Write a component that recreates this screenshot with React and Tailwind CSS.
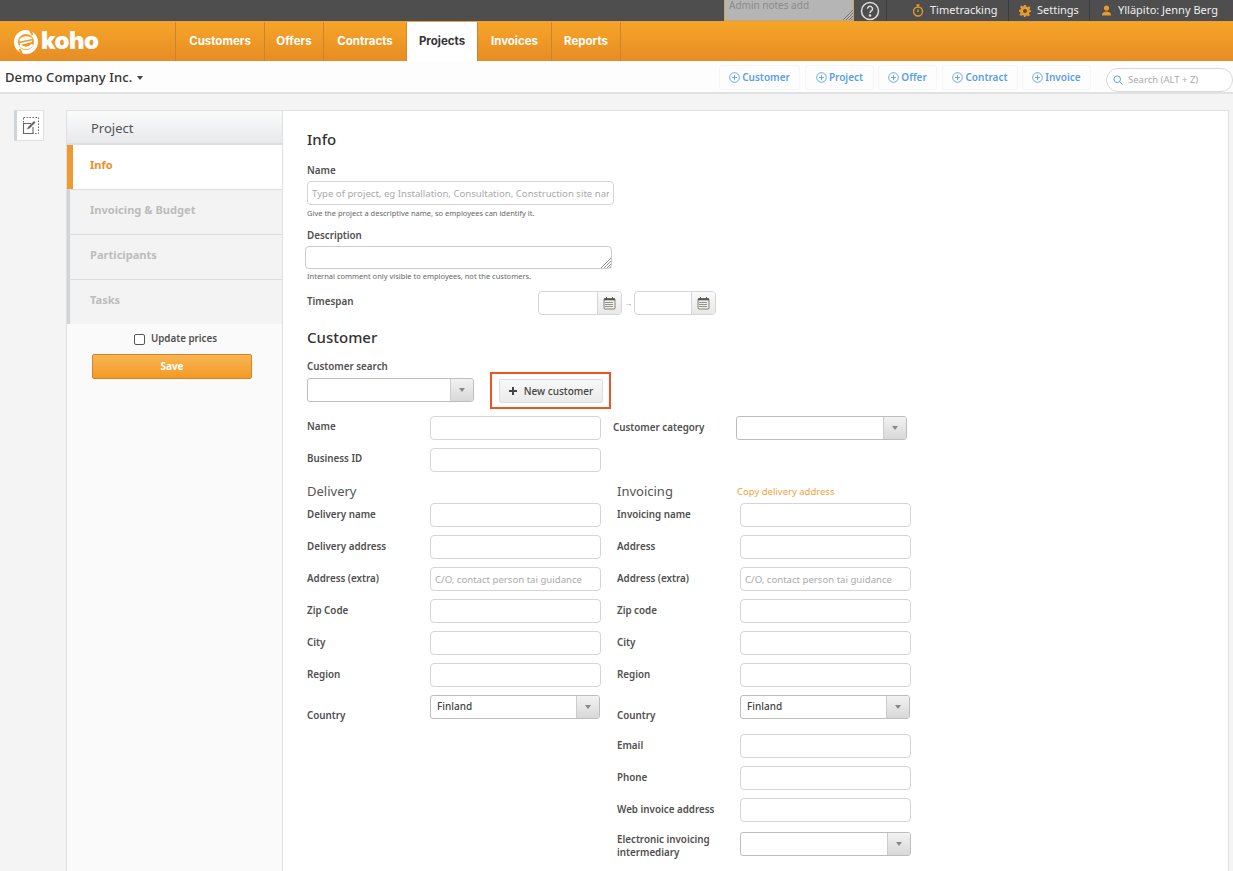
import React from "react";

const Tri = ({ c = "border-t-[#888]" }) => <span className={`inline-block w-0 h-0 border-l-[3px] border-r-[3px] border-t-[4px] border-l-transparent border-r-transparent ${c}`} />;

const Input = ({ w = "w-[171px]", placeholder, className = "" }) => (
  <input readOnly placeholder={placeholder} className={`${w} h-[24px] shrink-0 bg-white border border-[#d5d5d5] rounded-[4px] px-[4px] text-[9.6px] text-[#444] placeholder:text-[#aaa] outline-none ${className}`} />
);

const Select = ({ w = "w-[171px]", value }) => (
  <div className={`${w} h-[24px] shrink-0 bg-white border border-[#bdbdbd] rounded-[3px] flex items-stretch overflow-hidden`}>
    <div className="flex-1 pl-[6px] text-[10px] font-medium text-[#444] leading-[21px]">{value}</div>
    <div className="w-[23px] border-l border-[#ccc] bg-gradient-to-b from-[#f2f2f2] to-[#d8d8d8] flex items-center justify-center"><Tri /></div>
  </div>
);

const Lab = ({ children, className = "" }) => <div className={`text-[9.8px] font-semibold text-[#505050] ${className}`}>{children}</div>;

const Row = ({ label, children, labelW = "w-[123px]", labelClass = "" }) => (
  <div className="flex items-start h-[24px] mb-[8px]">
    <Lab className={`${labelW} shrink-0 leading-[24px] ${labelClass}`}>{label}</Lab>
    {children}
  </div>
);

const Cal = () => (
  <svg width="13" height="14" viewBox="0 0 13 14" fill="none">
    <rect x="1" y="2.5" width="11" height="10.5" rx="1" fill="#f3efe8" stroke="#666" strokeWidth="0.8" />
    <rect x="1" y="2.5" width="11" height="1.8" fill="#555" />
    <path d="M3.5 1v2.5M9.5 1v2.5" stroke="#555" strokeWidth="1" />
    <path d="M2.5 6.5h8M2.5 8.5h8M2.5 10.5h8" stroke="#333" strokeDasharray="1 1" />
  </svg>
);

const DateField = ({ w }) => (
  <div className={`${w} h-[24px] bg-white border border-[#d5d5d5] rounded-[4px] flex justify-end overflow-hidden`}>
    <div className="w-[24px] border-l border-[#d5d5d5] bg-gradient-to-b from-[#fafafa] to-[#e8e8e8] flex items-center justify-center"><Cal /></div>
  </div>
);

const PlusCircle = () => (
  <svg width="11" height="11" viewBox="0 0 11 11" fill="none" stroke="#5b9fe6" strokeWidth="0.9" className="shrink-0">
    <circle cx="5.5" cy="5.5" r="4.8" />
    <path d="M5.5 3v5M3 5.5h5" />
  </svg>
);

const tabs = [
  ["Customers", "w-[89px]"],
  ["Offers", "w-[59px]"],
  ["Contracts", "w-[83px]"],
  ["Projects", "w-[71px]", true],
  ["Invoices", "w-[74px]"],
  ["Reports", "w-[69px]"],
];

const actions = [
  ["Customer", "w-[81px]", "mr-[5px]"],
  ["Project", "w-[69px]", "mr-[4px]"],
  ["Offer", "w-[59px]", "mr-[5px]"],
  ["Contract", "w-[76px]", "mr-[4px]"],
  ["Invoice", "w-[69px]", ""],
];

const delivery = [
  ["Delivery name"], ["Delivery address"], ["Address (extra)", "C/O, contact person tai guidance"], ["Zip Code"], ["City"], ["Region"],
];
const invoicing = [
  ["Invoicing name"], ["Address"], ["Address (extra)", "C/O, contact person tai guidance"], ["Zip code"], ["City"], ["Region"],
];

const side = ["Invoicing & Budget", "Participants", "Tasks"];

export default function App() {
  return (
    <div className="h-[871px] w-[1233px] overflow-hidden bg-[#f4f4f4] text-[#333]" style={{ fontFamily: '"Noto Sans", sans-serif' }}>
      {/* top bar */}
      <div className="h-[21px] bg-[#4e4e4e] flex justify-end items-stretch text-[11px] text-[#eee]">
        <div className="w-[130px] bg-[#b5b5b5] border-x border-b border-[#c9a765] relative text-[10px] text-[#8b8b8b] pl-[4px] leading-[10px]">
          Admin notes add
          <svg width="11" height="11" viewBox="0 0 11 11" className="absolute right-0 bottom-0" stroke="#666" strokeWidth="0.8"><path d="M1 11L11 1M4 11l7-7M7 11l4-4M9.5 11L11 9.5" /></svg>
        </div>
        <div className="w-[33px] flex items-center justify-center border-r border-[#3c3c3c]">
          <svg width="20" height="20" viewBox="0 0 20 20" fill="none" stroke="#ddd" strokeWidth="1.5">
            <circle cx="10" cy="10" r="8.5" />
            <path d="M7.5 7.8a2.5 2.5 0 1 1 3.8 2.1c-.9.6-1.3 1-1.3 2" />
            <circle cx="10" cy="14.5" r=".6" fill="#ddd" />
          </svg>
        </div>
        <div className="w-[122px] flex items-center pl-[25px] gap-[6px] border-r border-[#3c3c3c]">
          <svg width="12" height="13" viewBox="0 0 12 13" fill="none" stroke="#e89b2c" strokeWidth="1.3" className="shrink-0"><circle cx="6" cy="7.5" r="4.5" /><path d="M4.5 1h3M6 1v2M6 5.5v2.5" /></svg>
          Timetracking
        </div>
        <div className="w-[81px] flex items-center pl-[10px] gap-[6px] border-r border-[#3c3c3c]">
          <svg width="12" height="12" viewBox="0 0 24 24" fill="#e89b2c" className="shrink-0"><path fillRule="evenodd" d="M10 0h4l.8 3.6 2.2.9 3.1-2 2.8 2.8-2 3.1.9 2.2L24 11v3l-3.2.8-.9 2.2 2 3.1-2.8 2.8-3.1-2-2.2.9L13 24h-3l-.8-3.200-2.200-.9-3.100 2L1.100 19.100l2-3.100-.9-2.200L0 13v-3l3.200-.8.9-2.200-2-3.100L4.900 1.100l3.100 2 1.200-.5zM12 8a4 4 0 1 0 0 8 4 4 0 0 0 0-8z" /></svg>
          Settings
        </div>
        <div className="w-[143px] flex items-center pl-[11px] gap-[6px]">
          <svg width="11" height="11" viewBox="0 0 11 11" fill="#e89b2c" className="shrink-0"><circle cx="5.5" cy="3" r="2.6" /><path d="M1 10.5c0-3 2-4 4.5-4s4.5 1 4.5 4z" /></svg>
          Ylläpito: Jenny Berg
        </div>
      </div>

      {/* orange nav */}
      <div className="h-[40px] bg-gradient-to-b from-[#f6a429] to-[#e68d24] flex items-stretch border-t border-[#e8a040]">
        <div className="w-[175px] flex items-center pl-[14px] gap-[3px]">
          <svg width="24" height="24" viewBox="0 0 24 24" fill="none" className="shrink-0">
            <circle cx="12" cy="12" r="10" stroke="#fff" strokeWidth="4" />
            <path d="M5.5 9.5C8 6 15 5 18.5 8.5L18 12 6 15z" fill="#fff" />
            <path d="M6 15c3 4 9 4 12.5-.5" stroke="#fff" strokeWidth="2.5" />
            <path d="M5 12.5L19 9.5" stroke="#f09a28" strokeWidth="1.6" />
            <path d="M16 0l2.5 5M5.5 19L8 24" stroke="#f29d2a" strokeWidth="2" />
          </svg>
          <span className="text-[24px] leading-none font-black text-white tracking-[-0.5px] -mt-[2px]" style={{ fontFamily: "Inter, sans-serif" }}>koho</span>
        </div>
        {tabs.map(([t, w, active]) => (
          <div key={t} className={`${w} border-l pt-[1px] ${active ? "bg-white text-[#333] border-[#d9892c]" : "text-white border-[#d0832a]"} flex items-center justify-center text-[11.5px] font-bold`} style={{ fontFamily: "Inter, sans-serif" }}>{t}</div>
        ))}
        <div className="border-l border-[#d0832a]" />
      </div>

      {/* sub bar */}
      <div className="h-[33px] bg-[#fdfdfd] border-b-2 border-[#e2e2e2] flex items-center pr-0">
        <div className="pl-[5px] pt-[3px] text-[13px] font-medium text-[#333] flex items-center gap-[5px] tracking-[0.1px]">Demo Company Inc. <Tri c="border-t-[#444]" /></div>
        <div className="ml-auto mt-[2px] flex items-center">
          {actions.map(([t, w, m]) => (
            <div key={t} className={`${w} ${m} h-[25px] border border-[#f5f6f8] rounded-[3px] flex items-center justify-center gap-[2px] text-[10px] font-semibold text-[#5b9fe6]`}><PlusCircle />{t}</div>
          ))}
          <div className="ml-[15px] w-[127px] h-[24px] mt-[5px] border border-[#d8d8d8] rounded-full bg-white flex items-center pl-[6px] gap-[5px] text-[9.5px] text-[#aaa]">
            <svg width="10" height="10" viewBox="0 0 10 10" fill="none" stroke="#5b9fe6" strokeWidth="1" className="shrink-0"><circle cx="4.2" cy="4.2" r="3.3" /><path d="M6.7 6.7L9.5 9.5" /></svg>
            Search (ALT + Z)
          </div>
        </div>
      </div>

      {/* body */}
      <div className="flex items-start pt-[16px] pl-[14px]">
        <div className="w-[30px] h-[31px] shrink-0 bg-white border border-[#e0e0e0] border-l-[3px] border-l-[#cfd4d9] flex items-center justify-center">
          <svg width="17" height="18" viewBox="0 0 17 18" fill="none" stroke="#666">
            <rect x="1.5" y=".5" width="15" height="16" strokeDasharray="1.5 1.5" strokeWidth="1" />
            <path d="M9 6.5H1.5v10H11V10" fill="#fff" stroke="#666" strokeWidth="1.1" />
            <path d="M5 12.5l1-2.500L12 4l1.500 1.500-6 6z" fill="#666" stroke="none" />
          </svg>
        </div>

        <div className="ml-[22px] w-[1163px] h-[780px] bg-white border border-[#e0e0e0] flex">
          {/* sidebar */}
          <div className="w-[216px] shrink-0 bg-[#fafafa] border-r border-[#e0e0e0]">
            <div className="h-[34px] bg-gradient-to-b from-[#fbfbfb] to-[#e7e9eb] border-b-2 border-[#dcdfe2] pl-[24px] text-[13px] text-[#555] leading-[34px]">Project</div>
            <div className="h-[44px] bg-white border-l-[6px] border-l-[#ee9a33] pl-[17px] text-[11px] font-bold text-[#ee8f22] leading-[40px]">Info</div>
            {side.map((s) => (
              <div key={s} className="h-[45px] bg-[#f3f3f3] border-l-[3px] border-l-[#cfd4d9] border-t border-t-[#dcdcdc] pl-[20px] text-[11.1px] font-bold text-[#bcbcbc] leading-[39px] last:border-b last:border-b-[#dcdcdc]">{s}</div>
            ))}
            <div className="flex items-center justify-center gap-[6px] h-[30px] pl-[2px]">
              <span className="w-[11px] h-[11px] border border-[#555] rounded-[2px] bg-white" />
              <span className="text-[9.8px] font-semibold text-[#505050]">Update prices</span>
            </div>
            <div className="mx-[25px] w-[160px] h-[25px] rounded-[2px] border border-[#d9822b] bg-gradient-to-b from-[#f8b552] to-[#f39a22] text-white text-[10px] font-bold text-center leading-[23px]">Save</div>
          </div>

          {/* main */}
          <div className="pl-[24px] flex-1">
            <div className="text-[15px] font-medium text-[#333] mt-[18px] leading-[20px]">Info</div>
            <Lab className="mt-[15px] leading-[14px]">Name</Lab>
            <Input w="w-[307px]" placeholder="Type of project, eg Installation, Consultation, Construction site name" className="mt-[3px]" />
            <div className="text-[7.5px] text-[#666] mt-[3px] leading-[10px]">Give the project a descriptive name, so employees can identify it.</div>
            <Lab className="mt-[11px] leading-[14px]">Description</Lab>
            <div className="-ml-[2px] mt-[3px] w-[307px] h-[23px] bg-white border border-[#ccc] rounded-[4px] relative">
              <svg width="11" height="11" viewBox="0 0 11 11" className="absolute right-0 bottom-0" stroke="#777" strokeWidth="0.8"><path d="M1 11L11 1M4 11l7-7M7 11l4-4M9.5 11L11 9.5" /></svg>
            </div>
            <div className="text-[7.5px] text-[#666] mt-[2px] leading-[10px]">Internal comment only visible to employees, not the customers.</div>
            <div className="flex items-center mt-[10px] h-[24px]">
              <Lab className="w-[231px] shrink-0 pb-[2px]">Timespan</Lab>
              <DateField w="w-[84px]" />
              <span className="w-[12px] text-center text-[8px] text-[#888]">→</span>
              <DateField w="w-[82px]" />
            </div>

            <div className="text-[15px] font-medium text-[#333] mt-[12px] leading-[20px]">Customer</div>
            <Lab className="mt-[13px] leading-[14px]">Customer search</Lab>
            <div className="flex items-start h-[33px]">
              <div className="mt-[4px]"><Select w="w-[167px]" /></div>
              <div className="relative ml-[25px] mt-[5px] w-[104px] h-[24px] bg-gradient-to-b from-[#f8f8f8] to-[#ebebeb] border border-[#ddd] rounded-[2px] flex items-center justify-center gap-[7px] text-[10px] font-medium text-[#444]">
                <svg width="8" height="8" viewBox="0 0 8 8" fill="#444" className="shrink-0"><path d="M3 0h2v3h3v2H5v3H3V5H0V3h3z" /></svg>New customer
                <div className="absolute -left-[10px] -top-[8px] w-[121px] h-[37px] border-2 border-[#ef5325]" />
              </div>
            </div>
            <div className="flex items-start mt-[9px] h-[32px]">
              <Row label="Name" labelClass="-mt-[1px]"><Input /></Row>
              <Lab className="ml-[12px] w-[123px] leading-[24px]">Customer category</Lab>
              <Select w="w-[171px]" />
            </div>
            <Row label="Business ID" labelClass="-mt-[1px]"><Input /></Row>

            <div className="flex mt-[5px]">
              <div className="w-[310px]">
                <div className="text-[13px] text-[#555] leading-[22px] h-[22px] mb-[1px]">Delivery</div>
                {delivery.map(([l, p]) => <Row key={l} label={l}><Input placeholder={p} /></Row>)}
                <Row label="Country" labelClass="pt-[9px]"><Select w="w-[170px]" value="Finland" /></Row>
              </div>
              <div>
                <div className="flex h-[22px] mb-[1px] items-center">
                  <div className="w-[120px] text-[13px] text-[#555] pt-[1px]">Invoicing</div>
                  <div className="text-[9.5px] text-[#f0a23e] pt-[2px]">Copy delivery address</div>
                </div>
                {invoicing.map(([l, p]) => <Row key={l} label={l}><Input placeholder={p} /></Row>)}
                <Row label="Country" labelClass="pt-[9px]"><Select w="w-[170px]" value="Finland" /></Row>
                <div className="h-[7px]" />
                <Row label="Email"><Input /></Row>
                <Row label="Phone"><Input /></Row>
                <Row label="Web invoice address"><Input /></Row>
                <div className="flex items-start h-[41px]">
                  <Lab className="w-[123px] shrink-0 leading-[13px] pt-[3px]">Electronic invoicing<br />intermediary</Lab>
                  <div className="mt-[2px]"><Select /></div>
                </div>
                <Input />
              </div>
            </div>
          </div>
        </div>
      </div>
    </div>
  );
}
